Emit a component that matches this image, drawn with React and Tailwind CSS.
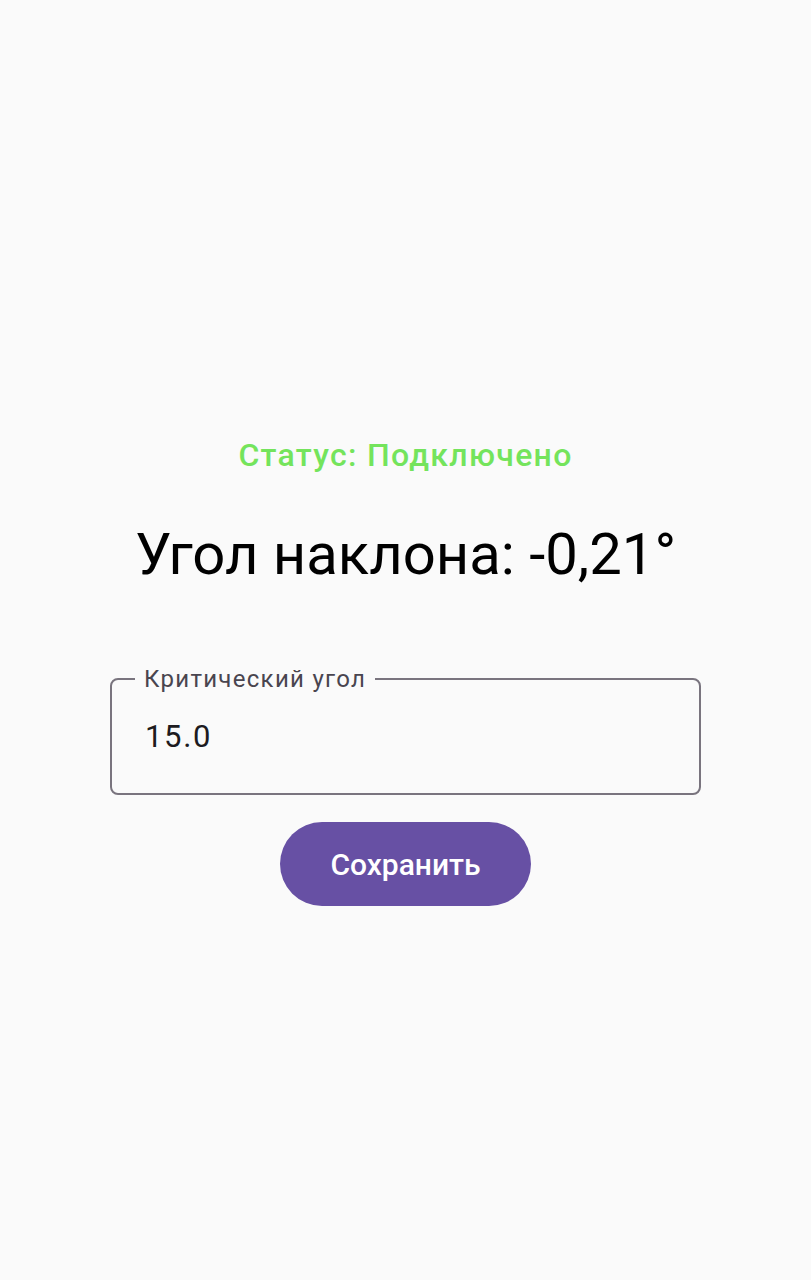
export default function App() {
  return (
    <div
      className="min-h-screen bg-[#fafafa] flex flex-col items-center pt-[435px]"
      style={{ fontFamily: "Roboto, 'Liberation Sans', sans-serif" }}
    >
      <div className="text-[32px] leading-[40px] tracking-[1.3px] font-medium text-[#74e45c]">
        Статус: Подключено
      </div>

      <div className="mt-[45px] text-[58px] leading-[68px] text-black">
        Угол наклона: -0,21°
      </div>

      <fieldset className="mt-[77px] w-[591px] border-2 border-[#79747e] rounded-lg pl-[23px] pr-4 pb-[38px] pt-[26px]">
        <legend className="px-[9px] text-[24px] leading-[28px] tracking-[1.3px] text-[#49454f]">
          Критический угол
        </legend>
        <div className="pl-[10px] text-[31px] leading-[36px] tracking-[1.7px] text-[#1d1b20]">15.0</div>
      </fieldset>

      <button className="mt-[27px] w-[251px] h-[84px] rounded-full bg-[#6750a4] text-white text-[30px] font-medium">
        Сохранить
      </button>
    </div>
  );
}
